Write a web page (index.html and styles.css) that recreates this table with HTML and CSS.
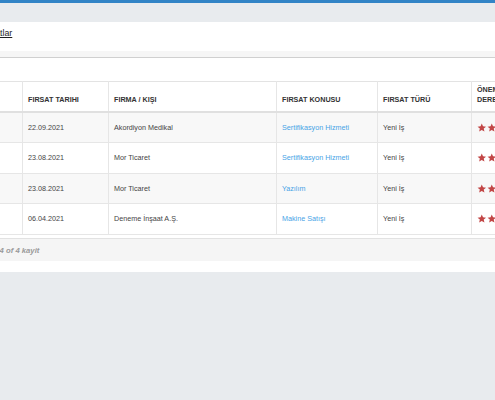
FILE: index.html
```html
<!DOCTYPE html>
<html lang="tr">
<head>
<meta charset="utf-8">
<title>Fırsatlar</title>
<link rel="stylesheet" href="styles.css">
</head>
<body>
<div class="topbar"></div>
<div class="page">
  <div class="panel-head">
    <a class="title" href="#">Fırsatlar</a>
  </div>
  <div class="panel-strip"></div>
  <div class="panel-body">
    <table class="grid">
      <colgroup>
        <col class="c1"><col class="c2"><col class="c3"><col class="c4"><col class="c5"><col class="c6">
      </colgroup>
      <thead>
        <tr>
          <th></th>
          <th>FIRSAT TARIHI</th>
          <th>FIRMA / KIŞI</th>
          <th>FIRSAT KONUSU</th>
          <th>FIRSAT TÜRÜ</th>
          <th>ÖNEM<br>DERECESİ</th>
        </tr>
      </thead>
      <tbody>
        <tr class="odd">
          <td></td><td>22.09.2021</td><td>Akordiyon Medikal</td><td><a href="#">Sertifikasyon Hizmeti</a></td><td>Yeni İş</td>
          <td><span class="stars"><svg viewBox="0 0 24 24"><path d="M12 1.5l3.2 7 7.6.7-5.8 5 1.8 7.4L12 17.7l-6.6 3.9 1.8-7.4-5.8-5 7.6-.7z"/></svg><svg viewBox="0 0 24 24"><path d="M12 1.5l3.2 7 7.6.7-5.8 5 1.8 7.4L12 17.7l-6.6 3.9 1.8-7.4-5.8-5 7.6-.7z"/></svg><svg viewBox="0 0 24 24"><path d="M12 1.5l3.2 7 7.6.7-5.8 5 1.8 7.4L12 17.7l-6.6 3.9 1.8-7.4-5.8-5 7.6-.7z"/></svg></span></td>
        </tr>
        <tr>
          <td></td><td>23.08.2021</td><td>Mor Ticaret</td><td><a href="#">Sertifikasyon Hizmeti</a></td><td>Yeni İş</td>
          <td><span class="stars"><svg viewBox="0 0 24 24"><path d="M12 1.5l3.2 7 7.6.7-5.8 5 1.8 7.4L12 17.7l-6.6 3.9 1.8-7.4-5.8-5 7.6-.7z"/></svg><svg viewBox="0 0 24 24"><path d="M12 1.5l3.2 7 7.6.7-5.8 5 1.8 7.4L12 17.7l-6.6 3.9 1.8-7.4-5.8-5 7.6-.7z"/></svg><svg viewBox="0 0 24 24"><path d="M12 1.5l3.2 7 7.6.7-5.8 5 1.8 7.4L12 17.7l-6.6 3.9 1.8-7.4-5.8-5 7.6-.7z"/></svg></span></td>
        </tr>
        <tr class="odd">
          <td></td><td>23.08.2021</td><td>Mor Ticaret</td><td><a href="#">Yazılım</a></td><td>Yeni İş</td>
          <td><span class="stars"><svg viewBox="0 0 24 24"><path d="M12 1.5l3.2 7 7.6.7-5.8 5 1.8 7.4L12 17.7l-6.6 3.9 1.8-7.4-5.8-5 7.6-.7z"/></svg><svg viewBox="0 0 24 24"><path d="M12 1.5l3.2 7 7.6.7-5.8 5 1.8 7.4L12 17.7l-6.6 3.9 1.8-7.4-5.8-5 7.6-.7z"/></svg><svg viewBox="0 0 24 24"><path d="M12 1.5l3.2 7 7.6.7-5.8 5 1.8 7.4L12 17.7l-6.6 3.9 1.8-7.4-5.8-5 7.6-.7z"/></svg></span></td>
        </tr>
        <tr>
          <td></td><td>06.04.2021</td><td>Deneme İnşaat A.Ş.</td><td><a href="#">Makine Satışı</a></td><td>Yeni İş</td>
          <td><span class="stars"><svg viewBox="0 0 24 24"><path d="M12 1.5l3.2 7 7.6.7-5.8 5 1.8 7.4L12 17.7l-6.6 3.9 1.8-7.4-5.8-5 7.6-.7z"/></svg><svg viewBox="0 0 24 24"><path d="M12 1.5l3.2 7 7.6.7-5.8 5 1.8 7.4L12 17.7l-6.6 3.9 1.8-7.4-5.8-5 7.6-.7z"/></svg><svg viewBox="0 0 24 24"><path d="M12 1.5l3.2 7 7.6.7-5.8 5 1.8 7.4L12 17.7l-6.6 3.9 1.8-7.4-5.8-5 7.6-.7z"/></svg></span></td>
        </tr>
      </tbody>
    </table>
    <div class="footer">1 - 4 of 4 kayit</div>
  </div>
</div>
</body>
</html>
```

FILE: styles.css
```css
html, body {
  margin: 0;
  padding: 0;
}
body {
  background: #e8ebee;
  font-family: "Liberation Sans", Arial, sans-serif;
  color: #333;
  overflow: hidden;
  width: 495px;
  height: 400px;
}
.topbar {
  height: 3px;
  background: #3284c6;
}
.page {
  margin-top: 19px;
  margin-left: -40px;
  width: 760px;
}
.panel-head {
  background: #fff;
  height: 29px;
  padding-left: 20px;
  box-sizing: border-box;
  padding-top: 5px;
  font-size: 8.8px;
  line-height: 12px;
}
.title {
  color: #1e1e1e;
  text-decoration: underline;
}
.panel-strip {
  height: 6px;
  background: #f6f6f6;
  border-bottom: 1px solid #d0d0d0;
}
.panel-body {
  background: #fff;
  padding-top: 23px;
  padding-bottom: 11px;
}
.grid {
  border-collapse: collapse;
  table-layout: fixed;
  width: 600px;
  font-size: 7.2px;
}
.c1 { width: 62px; }
.c2 { width: 86px; }
.c3 { width: 168px; }
.c4 { width: 101px; }
.c5 { width: 94px; }
.c6 { width: 89px; }
.grid th, .grid td {
  border: 1px solid #e6e6e6;
  padding: 0 5px;
  text-align: left;
  white-space: nowrap;
  overflow: hidden;
}
.grid thead th {
  height: 30px;
  box-sizing: border-box;
  vertical-align: bottom;
  padding-bottom: 6px;
  font-weight: bold;
  color: #333;
  line-height: 10px;
  border-top: 1px solid #e3e3e3;
  border-bottom: 2px solid #e0e0e0;
}
.grid td {
  height: 29.5px;
  vertical-align: middle;
  color: #444;
}
.grid tr.odd td {
  background: #f8f8f8;
}
.grid a {
  color: #47a3e6;
  text-decoration: none;
}
.stars {
  display: inline-flex;
  gap: 0;
  vertical-align: middle;
}
.stars svg {
  width: 9.5px;
  height: 9.5px;
  fill: #c24646;
}
.footer {
  margin-top: 3px;
  border-top: 1px solid #e2e2e2;
  background: #f5f5f5;
  height: 22px;
  line-height: 24px;
  padding-left: 28.5px;
  font-size: 7.7px;
  font-weight: bold;
  font-style: italic;
  color: #9a9a9a;
}
```
